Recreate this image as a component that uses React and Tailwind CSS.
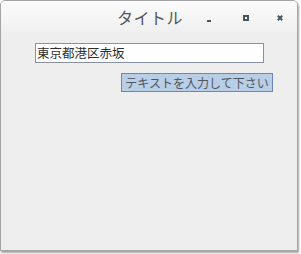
export default function App() {
  const jp = { fontFamily: '"Noto Sans CJK JP", "Noto Sans", sans-serif' };
  return (
    <div className="w-[301px] h-[254px] bg-white" style={jp}>
      <div className="w-[298px] h-[251px] flex flex-col border border-[#a4a4a4] rounded-t-[5px] bg-[#eeeeee] shadow-[1px_2px_2px_rgba(0,0,0,0.35)] overflow-hidden">
        <div className="h-[32px] flex items-center bg-gradient-to-b from-[#fcfcfc] to-[#efefef] shrink-0">
          <span className="ml-[116px] text-[16px] leading-none text-[#4f575e] tracking-[0.5px]">タイトル</span>
          <div className="ml-auto flex items-center">
            <div className="w-[4px] h-[2px] bg-[#4a545c] mt-[8px] mr-[32px]" />
            <div className="w-[6px] h-[6px] border-[2px] border-[#4a545c] mt-[2px] mr-[28px]" />
            <svg width="6" height="6" viewBox="0 0 6 6" className="mt-[2px] mr-[14px]">
              <path d="M0.8 0.8 L5.2 5.2 M5.2 0.8 L0.8 5.2" stroke="#4a545c" strokeWidth="2" />
            </svg>
          </div>
        </div>
        <div className="flex flex-col pl-[34px] pt-[10px]">
          <div className="w-[229px] h-[20px] bg-white border border-[#8791a0] flex items-center pl-[1px] text-[12.5px] leading-none text-[#2e2e2e]">
            東京都港区赤坂
          </div>
          <div className="self-end mr-[24px] mt-[10px] w-[152px] h-[19px] bg-[#b8cde6] border border-[#6a86c2] flex items-center justify-center text-[12px] leading-none text-[#50565c]">
            テキストを入力して下さい
          </div>
        </div>
      </div>
    </div>
  );
}
